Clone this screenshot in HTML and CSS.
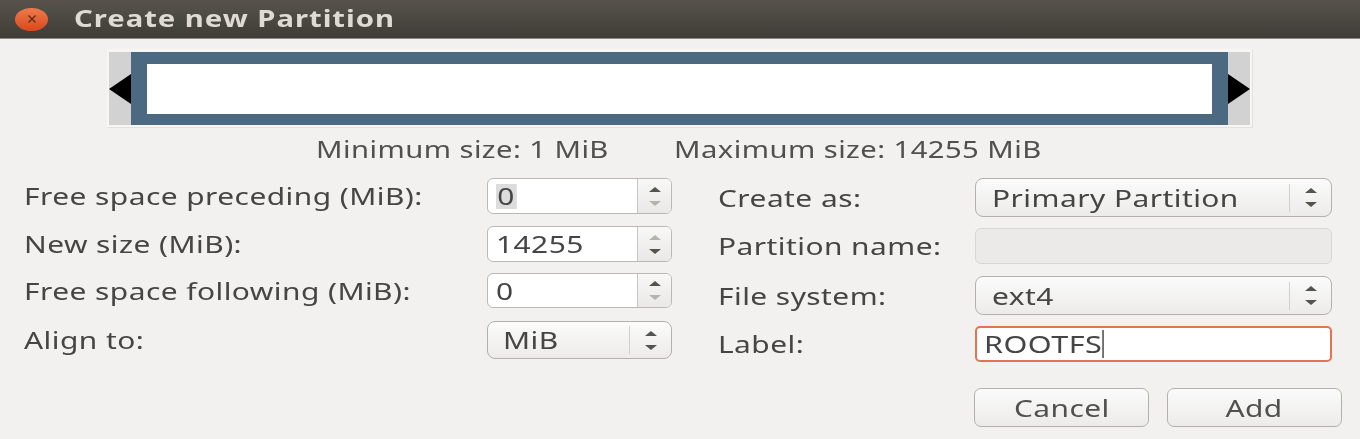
FILE: index.html
```html
<!DOCTYPE html>
<html lang="en">
<head>
<meta charset="utf-8">
<title>Create new Partition</title>
<link rel="stylesheet" href="styles.css">
</head>
<body>
<div class="window">
  <header class="titlebar">
    <span class="close"><svg viewBox="0 0 14 10" width="14" height="10"><path d="M3.5 1.5 10.5 8.5M10.5 1.5 3.5 8.5" stroke="#5a2c18" stroke-width="1.3" fill="none"/></svg></span>
    <span class="title t">Create new Partition</span>
  </header>
  <section class="slider">
    <div class="grip grip-left"><svg viewBox="0 0 22 30" width="22" height="30"><path d="M0 15 22 0V30Z" fill="#000"/></svg></div>
    <div class="part"><div class="part-inner"></div></div>
    <div class="grip grip-right"><svg viewBox="0 0 22 30" width="22" height="30"><path d="M22 15 0 0V30Z" fill="#000"/></svg></div>
  </section>
  <div class="limits">
    <span class="t limit-min">Minimum size: 1 MiB</span>
    <span class="t">Maximum size: 14255 MiB</span>
  </div>
  <div class="form">
    <div class="col col-left">
      <div class="row r1"><label class="t">Free space preceding (MiB):</label>
        <div class="spin"><div class="spin-val"><span class="t sel">0</span></div><div class="spin-btn"><svg class="ar" viewBox="0 0 14 5" width="14" height="5"><path d="M7 0 13 5H1Z" fill="#55534e"/></svg><svg class="ar" viewBox="0 0 14 5" width="14" height="5"><path d="M1 0H13L7 5Z" fill="#b5b3ae"/></svg></div></div></div>
      <div class="row r2"><label class="t">New size (MiB):</label>
        <div class="spin"><div class="spin-val"><span class="t">14255</span></div><div class="spin-btn"><svg class="ar" viewBox="0 0 14 5" width="14" height="5"><path d="M7 0 13 5H1Z" fill="#b5b3ae"/></svg><svg class="ar" viewBox="0 0 14 5" width="14" height="5"><path d="M1 0H13L7 5Z" fill="#55534e"/></svg></div></div></div>
      <div class="row r3"><label class="t">Free space following (MiB):</label>
        <div class="spin"><div class="spin-val"><span class="t">0</span></div><div class="spin-btn"><svg class="ar" viewBox="0 0 14 5" width="14" height="5"><path d="M7 0 13 5H1Z" fill="#55534e"/></svg><svg class="ar" viewBox="0 0 14 5" width="14" height="5"><path d="M1 0H13L7 5Z" fill="#b5b3ae"/></svg></div></div></div>
      <div class="row r4"><label class="t">Align to:</label>
        <div class="combo combo-small"><span class="combo-text"><span class="t">MiB</span></span><span class="combo-arrows"><svg class="ar" viewBox="0 0 14 5" width="14" height="5"><path d="M7 0 13 5H1Z" fill="#55534e"/></svg><svg class="ar" viewBox="0 0 14 5" width="14" height="5"><path d="M1 0H13L7 5Z" fill="#55534e"/></svg></span></div></div>
    </div>
    <div class="col col-right">
      <div class="row q1"><label class="t">Create as:</label>
        <div class="combo"><span class="combo-text"><span class="t">Primary Partition</span></span><span class="combo-arrows"><svg class="ar" viewBox="0 0 14 5" width="14" height="5"><path d="M7 0 13 5H1Z" fill="#55534e"/></svg><svg class="ar" viewBox="0 0 14 5" width="14" height="5"><path d="M1 0H13L7 5Z" fill="#55534e"/></svg></span></div></div>
      <div class="row q2"><label class="t">Partition name:</label><div class="entry-disabled"></div></div>
      <div class="row q3"><label class="t">File system:</label>
        <div class="combo"><span class="combo-text"><span class="t">ext4</span></span><span class="combo-arrows"><svg class="ar" viewBox="0 0 14 5" width="14" height="5"><path d="M7 0 13 5H1Z" fill="#55534e"/></svg><svg class="ar" viewBox="0 0 14 5" width="14" height="5"><path d="M1 0H13L7 5Z" fill="#55534e"/></svg></span></div></div>
      <div class="row q4"><label class="t">Label:</label><div class="entry-focus"><span class="t caret">ROOTFS</span></div></div>
    </div>
  </div>
  <footer class="actions">
    <button class="btn"><span class="t t-center">Cancel</span></button>
    <button class="btn"><span class="t t-center">Add</span></button>
  </footer>
</div>
</body>
</html>
```

FILE: styles.css
```css
* { box-sizing: border-box; }
html, body { margin: 0; padding: 0; }
body {
  width: 1360px; height: 439px; overflow: hidden;
  background: #f2f1f0; color: #454545;
  font-family: "Noto Sans", "DejaVu Sans", sans-serif;
  font-size: 23px; letter-spacing: 0.35px;
}
.t {
  display: inline-block; white-space: nowrap;
  transform: scaleX(1.3); transform-origin: left center;
  filter: blur(0.45px);
}
.t-center { transform-origin: center; }
.titlebar {
  height: 39px; display: flex; align-items: center;
  background: linear-gradient(#57534c, #3f3c37);
  border-bottom: 1px solid #8e8b85;
  padding-left: 15px;
}
.close {
  width: 33px; height: 23px; border-radius: 50%;
  background: linear-gradient(#ef7a4c, #d9491c);
  display: flex; align-items: center; justify-content: center;
}
.title { margin-left: 26px; color: #dfdbd2; font-size: 22.5px; font-weight: 700; letter-spacing: 0.75px; line-height: 38px; }
.slider {
  margin: 10px 0 0 107px; width: 1146px; height: 79px;
  display: flex; padding: 2px 2px 2px 1px;
  background: #f7f6f5; border: 1px solid #e2e1df; border-top-color: #f7f6f5; border-left-color: #f7f6f5;
}
.grip { width: 22px; background: #d2d2d2; display: flex; align-items: center; }
.grip svg { display: block; flex: none; }
.part { flex: 1; background: #4b6981; padding: 12px 16px 11px; }
.part-inner { height: 100%; background: #fff; }
.limits {
  display: flex; padding-left: 316px;
  margin-top: 5px; height: 32px; line-height: 32px;
  color: #505050;
}
.limit-min { width: 358px; }
.limits .t { transform: scaleX(1.27); }
.form { display: flex; padding: 0 28px 0 24px; margin-top: 13px; gap: 46px; }
.col { display: flex; flex-direction: column; }
.col-left { width: 648px; }
.col-right { width: 614px; }
.row { display: flex; align-items: center; justify-content: space-between; line-height: 30px; }
.r1 { height: 36px; margin-bottom: 12px; }
.r2 { height: 36px; margin-bottom: 11px; }
.r3 { height: 35px; margin-bottom: 13px; }
.r4 { height: 38px; }
.q1 { height: 39px; margin-bottom: 11px; }
.q2 { height: 36px; margin-bottom: 12px; }
.q3 { height: 39px; margin-bottom: 11px; }
.q4 { height: 36px; }
.spin {
  width: 185px; height: 100%; display: flex; background: #fff;
  border: 1px solid #bcb9b4; border-radius: 6px; overflow: hidden;
}
.spin-val { flex: 1; padding-left: 8px; display: flex; align-items: center; }
.sel { background: #dcdcdc; line-height: 25px; height: 25px; padding: 0 1px; }
.spin-btn {
  width: 34px; border-left: 1px solid #c8c6c2;
  background: linear-gradient(#f8f8f7, #e9e8e6);
  display: flex; flex-direction: column; align-items: center; justify-content: center; gap: 9px;
}
.ar { display: block; }
.combo {
  width: 357px; height: 100%; display: flex; align-items: center;
  border: 1px solid #b4b1ac; border-radius: 8px;
  background: linear-gradient(#fbfbfb, #ecebe9);
  padding: 0 0 0 16px;
}
.combo-small { width: 185px; padding-left: 15px; }
.combo-text { flex: 1; }
.combo-arrows {
  width: 42px; height: 28px; border-left: 1px solid #d2d0cc;
  display: flex; flex-direction: column; align-items: center; justify-content: center; gap: 9px;
}
.entry-disabled {
  width: 357px; height: 100%; background: #ebeae9;
  border: 1px solid #d8d6d3; border-radius: 6px;
}
.entry-focus {
  width: 357px; height: 100%; background: #fff;
  border: 2px solid #e27450; border-radius: 5px;
  display: flex; align-items: center; padding-left: 7px;
}
.caret { border-right: 1.5px solid #333; line-height: 28px; transform: scaleX(1.33); }
.actions { display: flex; justify-content: flex-end; gap: 18px; padding-right: 18px; margin-top: 26px; }
.btn {
  width: 175px; height: 39px; padding: 0;
  font: inherit; letter-spacing: inherit; color: #505050;
  border: 1px solid #b4b1ac; border-radius: 7px;
  background: linear-gradient(#fbfbfb, #ecebe9);
}
```
